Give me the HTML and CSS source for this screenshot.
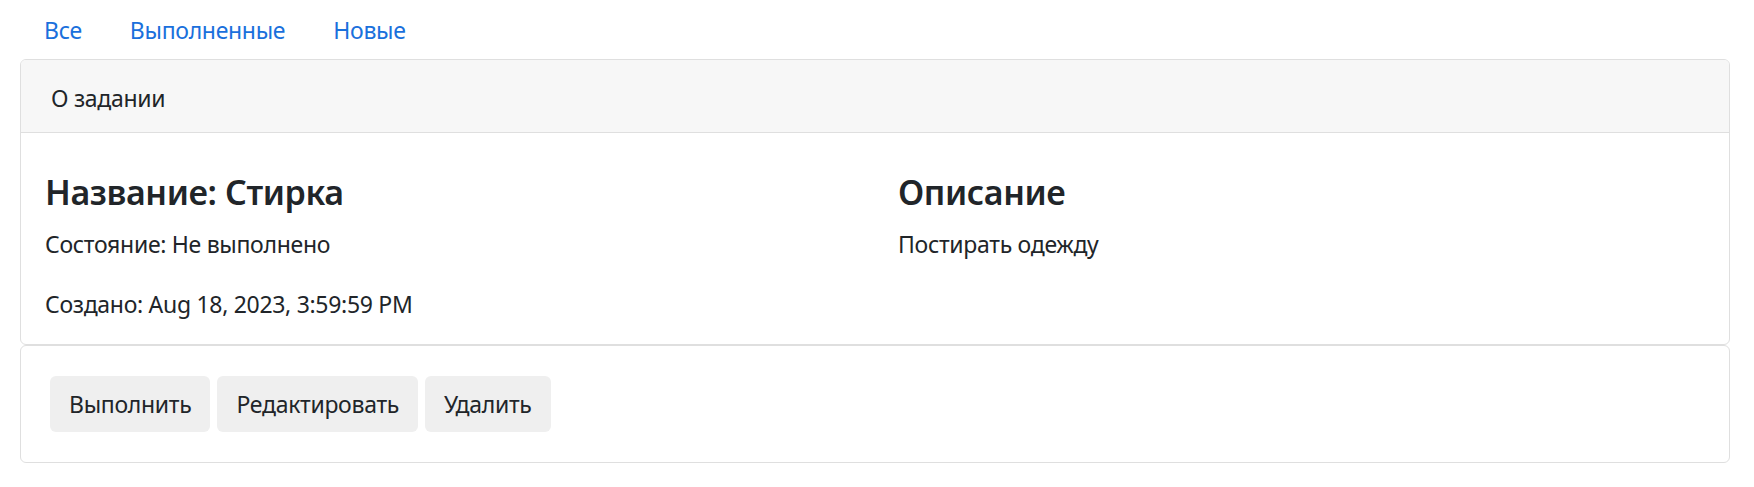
FILE: index.html
```html
<!DOCTYPE html>
<html lang="ru">
<head>
<meta charset="utf-8">
<title>О задании</title>
<link rel="stylesheet" href="styles.css">
</head>
<body>
<div class="page">
  <nav class="nav">
    <a class="nav-link" href="#">Все</a>
    <a class="nav-link" href="#">Выполненные</a>
    <a class="nav-link" href="#">Новые</a>
  </nav>
  <div class="card">
    <div class="card-header">О задании</div>
    <div class="card-body">
      <div class="col">
        <h4 class="title">Название: Стирка</h4>
        <p class="text">Состояние: Не выполнено</p>
        <p class="text last">Создано: Aug 18, 2023, 3:59:59 PM</p>
      </div>
      <div class="col">
        <h4 class="title">Описание</h4>
        <p class="text last">Постирать одежду</p>
      </div>
    </div>
  </div>
  <div class="card actions">
    <button class="btn" type="button">Выполнить</button>
    <button class="btn" type="button">Редактировать</button>
    <button class="btn" type="button">Удалить</button>
  </div>
</div>
</body>
</html>
```
FILE: styles.css
```css
html, body {
  margin: 0;
  padding: 0;
  background: #ffffff;
}
body {
  font-family: "Noto Sans", "Open Sans", sans-serif;
  font-size: 23px;
  letter-spacing: -0.3px;
  line-height: 36px;
  color: #212529;
}
.page {
  padding: 0 24px 0 20px;
}
.nav {
  display: flex;
}
.nav-link {
  display: block;
  padding: 12px 24px 11px;
  color: #1a70dc;
  text-decoration: none;
}
.card {
  border: 1px solid #dfdfdf;
  border-radius: 6px;
  background: #ffffff;
  overflow: hidden;
}
.card-header {
  padding: 20px 30px 16px;
  background: #f7f7f7;
  border-bottom: 1px solid #dfdfdf;
}
.card-body {
  display: grid;
  grid-template-columns: 1fr 1fr;
  column-gap: 46px;
  padding: 38px 24px 22px;
}
.title {
  margin: 0 0 12px;
  font-size: 34px;
  letter-spacing: -0.4px;
  line-height: 43px;
  font-weight: 600;
}
.text {
  margin: 0 0 24px;
}
.text.last {
  margin-bottom: 0;
}
.actions {
  display: flex;
  gap: 7px;
  padding: 30px 29px;
}
.btn {
  font: inherit;
  letter-spacing: inherit;
  color: #212529;
  background: #efefef;
  border: 0;
  border-radius: 6px;
  padding: 10px 19px;
  line-height: 36px;
}
```
